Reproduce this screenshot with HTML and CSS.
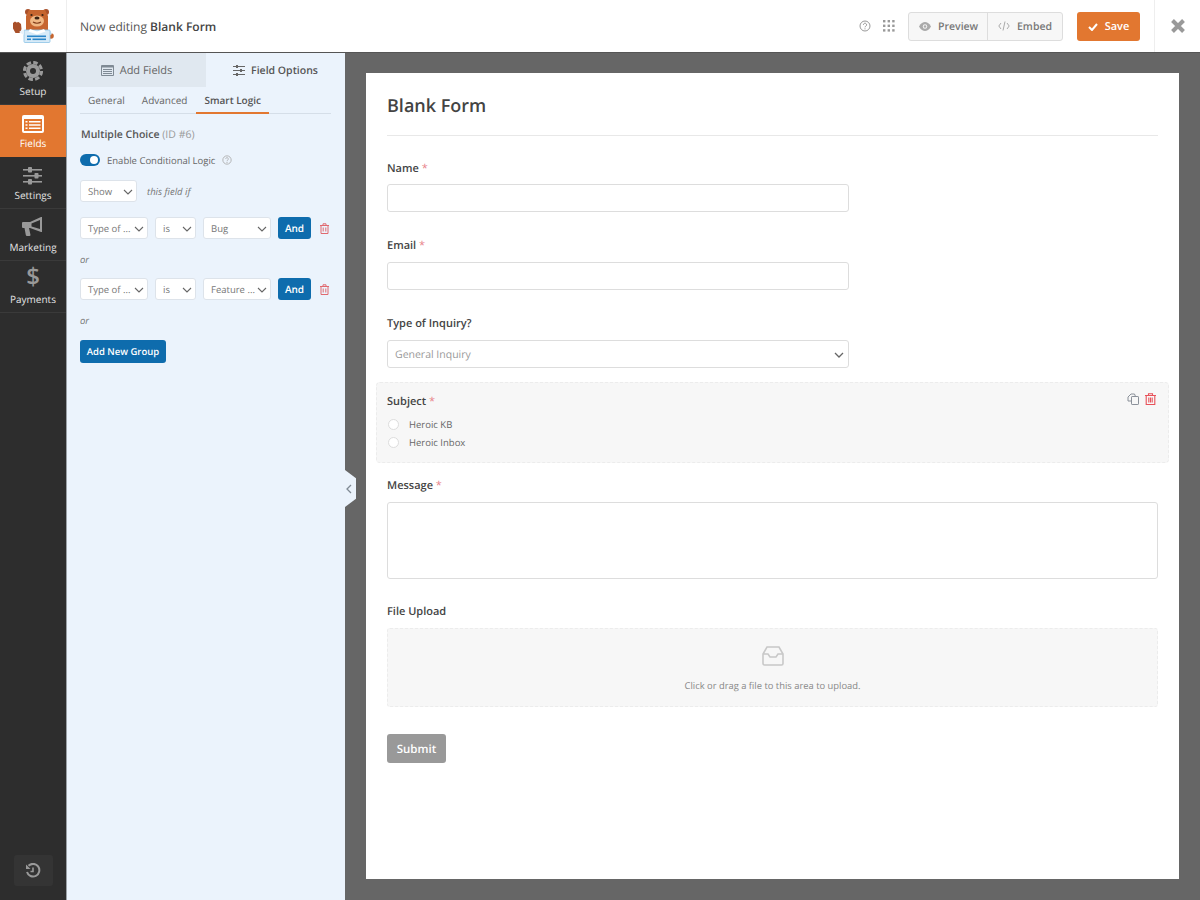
FILE: index.html
```html
<!DOCTYPE html>
<html lang="en">
<head>
<meta charset="utf-8">
<title>Now editing Blank Form</title>
<link rel="stylesheet" href="styles.css">
</head>
<body>
<div class="app">
  <header class="topbar">
    <div class="logo">
      <svg width="42" height="42" viewBox="0 0 42 42">
        <circle cx="16" cy="7" r="3" fill="#a8502a"/><circle cx="34" cy="7" r="3" fill="#a8502a"/>
        <path d="M17 5h16l3 6v14H14V11z" fill="#c6652f"/>
        <ellipse cx="25" cy="16" rx="7" ry="5.500" fill="#f0b884"/>
        <ellipse cx="25" cy="13" rx="2.500" ry="1.600" fill="#3b2314"/>
        <circle cx="19.500" cy="10" r="1.100" fill="#3b2314"/><circle cx="30.500" cy="10" r="1.100" fill="#3b2314"/>
        <path d="M21 17q4 2.500 8 0" fill="none" stroke="#7d3a18" stroke-width="1.100"/>
        <circle cx="39" cy="31" r="2.800" fill="#c6652f"/>
        <path d="M36 26h2.500l1.500 3-3 2z" fill="#cfe6f7"/>
        <rect x="12" y="25" width="26" height="12.500" rx="1" fill="#d8ebf8" stroke="#8cc3e6" stroke-width=".8"/>
        <path d="M18 24l7 2.500 7-2.500 1.500 2.500-8.500 3-8.500-3z" fill="#fff"/>
        <rect x="15" y="30.500" width="19" height="1.600" fill="#2b86c9"/><rect x="15" y="33.500" width="4" height="1.600" fill="#2b86c9"/><rect x="20.500" y="33.500" width="13.500" height="1.600" fill="#2b86c9"/>
        <path d="M1 18l2-1.500 1.500 1 2-.5 2.500 2 .5 5-1.500 4H3.500L1 23.500z" fill="#a8502a"/>
        <path d="M7 27l5 3v-4l-2-1z" fill="#e9f3fb"/>
      </svg>
    </div>
    <div class="title">Now editing <strong>Blank Form</strong></div>
    <div class="actions">
      <svg class="help" width="12" height="12" viewBox="0 0 12 12"><circle cx="6" cy="6" r="5" fill="none" stroke="#999"/><path d="M4.400 4.800a1.600 1.600 0 1 1 2.400 1.400c-.6.3-.8.6-.8 1.100" fill="none" stroke="#999"/><circle cx="6" cy="8.800" r=".6" fill="#999"/></svg>
      <svg class="apps" width="12" height="12" viewBox="0 0 12 12" fill="#999"><rect x="0" y="0" width="2.400" height="2.400"/><rect x="4.600" y="0" width="2.400" height="2.400"/><rect x="9.200" y="0" width="2.400" height="2.400"/><rect x="0" y="4.600" width="2.400" height="2.400"/><rect x="4.600" y="4.600" width="2.400" height="2.400"/><rect x="9.200" y="4.600" width="2.400" height="2.400"/><rect x="0" y="9.200" width="2.400" height="2.400"/><rect x="4.600" y="9.200" width="2.400" height="2.400"/><rect x="9.200" y="9.200" width="2.400" height="2.400"/></svg>
      <div class="btn-group">
        <div class="ghost preview-btn">
          <svg width="12" height="9" viewBox="0 0 12 9"><path d="M0 4.500C2 1 4 0 6 0s4 1 6 4.500C10 8 8 9 6 9S2 8 0 4.500z" fill="#aaa"/><circle cx="6" cy="4.500" r="2.200" fill="#f5f5f5"/><circle cx="6" cy="4.500" r="1.200" fill="#aaa"/></svg>
          <span>Preview</span>
        </div>
        <div class="ghost embed-btn">
          <svg width="12" height="10" viewBox="0 0 12 10" fill="none" stroke="#aaa"><path d="M3 2L.8 5 3 8M9 2l2.200 3L9 8M7 .5L5 9.500"/></svg>
          <span>Embed</span>
        </div>
      </div>
      <div class="save">
        <svg width="10" height="8" viewBox="0 0 10 8" fill="none" stroke="#fff" stroke-width="2"><path d="M1 4l3 3 5-6"/></svg>
        Save
      </div>
    </div>
    <div class="close">
      <svg width="14" height="14" viewBox="0 0 14 14" stroke="#999" stroke-width="4"><path d="M1.500 1.500l11 11M12.500 1.500l-11 11"/></svg>
    </div>
  </header>

  <div class="main">
    <nav class="sidebar">
      <div class="nav-item">
        <svg width="20" height="20" viewBox="0 0 20 20"><circle cx="10" cy="10" r="7" fill="#999"/><circle cx="10" cy="10" r="8.600" fill="none" stroke="#999" stroke-width="3" stroke-dasharray="4.500 2.250"/><circle cx="10" cy="10" r="3" fill="#2d2d2d"/></svg>
        <span>Setup</span>
      </div>
      <div class="nav-item active">
        <svg width="22" height="18" viewBox="0 0 22 18"><rect width="22" height="18" rx="2" fill="#fff"/><rect x="2" y="4" width="18" height="12" fill="#e27730"/><path d="M3.500 6h2v1.600h-2zM3.500 9.200h2v1.600h-2zM3.500 12.400h2V14h-2zM7 6h11.500v1.600H7zM7 9.200h11.500v1.600H7zM7 12.400h11.500V14H7z" fill="#fff"/></svg>
        <span>Fields</span>
      </div>
      <div class="nav-item">
        <svg width="20" height="18" viewBox="0 0 20 18" fill="#999"><rect y="2" width="19" height="1.600"/><rect y="8" width="19" height="1.600"/><rect y="14" width="19" height="1.600"/><rect x="5" y="0" width="4" height="5.500" rx=".8"/><rect x="11.500" y="6" width="4" height="5.500" rx=".8"/><rect x="5" y="12" width="4" height="5.500" rx=".8"/></svg>
        <span>Settings</span>
      </div>
      <div class="nav-item">
        <svg width="22" height="20" viewBox="0 0 22 20" fill="#999"><path d="M0 6q0-1 1-1h7l11-5h1v15h-1L8 11H7l1.500 7q0 1-1 1H5q-1 0-1.200-1L2.500 11H1q-1 0-1-1z"/><path d="M18 3L9.500 6.500v3L18 12z" fill="#2d2d2d"/></svg>
        <span>Marketing</span>
      </div>
      <div class="nav-item">
        <span class="dollar">$</span>
        <span>Payments</span>
      </div>
      <div class="history">
        <svg width="16" height="16" viewBox="0 0 16 16" fill="none" stroke="#999" stroke-width="2"><path d="M3.500 2.800A6.300 6.300 0 1 1 2 9"/><path d="M1 1.500v4.500h4.500z" fill="#999" stroke="none"/><path d="M8 4.500V8.500H5.500" stroke-width="1.600"/></svg>
      </div>
    </nav>

    <aside class="panel">
      <div class="panel-tabs">
        <div class="panel-tab">
          <svg width="13" height="11" viewBox="0 0 13 11"><rect width="13" height="11" rx="1" fill="#7f8a94"/><rect x="1" y="2.500" width="11" height="7.500" fill="#e0e8f0"/><path d="M2 4h9v1H2zM2 6h9v1H2zM2 8h9v1H2z" fill="#7f8a94"/></svg>
          Add Fields
        </div>
        <div class="panel-tab current">
          <svg width="12" height="11" viewBox="0 0 12 11" fill="#666"><rect y="1" width="12" height="1"/><rect y="5" width="12" height="1"/><rect y="9" width="12" height="1"/><rect x="3" y="0" width="2" height="3"/><rect x="7" y="4" width="2" height="3"/><rect x="3" y="8" width="2" height="3"/></svg>
          Field Options
        </div>
      </div>
      <div class="subtabs">
        <div class="subtab">General</div>
        <div class="subtab">Advanced</div>
        <div class="subtab on">Smart Logic</div>
      </div>
      <div class="field-name">Multiple Choice <span>(ID #6)</span></div>
      <div class="toggle-row">
        <span class="toggle"></span>
        <span>Enable Conditional Logic</span>
        <svg width="10" height="10" viewBox="0 0 12 12"><circle cx="6" cy="6" r="5" fill="none" stroke="#aaa"/><path d="M4.400 4.800a1.600 1.600 0 1 1 2.400 1.400c-.6.3-.8.6-.8 1.100" fill="none" stroke="#aaa"/><circle cx="6" cy="8.800" r=".7" fill="#aaa"/></svg>
      </div>
      <div class="show-row">
        <div class="select w-show">Show<svg class="chev" width="10" height="6" viewBox="0 0 10 6"><path d="M1 1l4 4 4-4"/></svg></div>
        <em>this field if</em>
      </div>
      <div class="rule">
        <div class="select w-type">Type of ...<svg class="chev" width="10" height="6" viewBox="0 0 10 6"><path d="M1 1l4 4 4-4"/></svg></div>
        <div class="select w-is">is<svg class="chev" width="10" height="6" viewBox="0 0 10 6"><path d="M1 1l4 4 4-4"/></svg></div>
        <div class="select w-val">Bug<svg class="chev" width="10" height="6" viewBox="0 0 10 6"><path d="M1 1l4 4 4-4"/></svg></div>
        <div class="and">And</div>
        <svg class="trash" width="9" height="11" viewBox="0 0 9 11" fill="none" stroke="#e0696f"><path d="M0 2.500h9M3 2.500V.8h3v1.700M1 2.500v8h7v-8M3.200 4.500v4M5.800 4.500v4"/></svg>
      </div>
      <div class="or">or</div>
      <div class="rule">
        <div class="select w-type">Type of ...<svg class="chev" width="10" height="6" viewBox="0 0 10 6"><path d="M1 1l4 4 4-4"/></svg></div>
        <div class="select w-is">is<svg class="chev" width="10" height="6" viewBox="0 0 10 6"><path d="M1 1l4 4 4-4"/></svg></div>
        <div class="select w-val">Feature ...<svg class="chev" width="10" height="6" viewBox="0 0 10 6"><path d="M1 1l4 4 4-4"/></svg></div>
        <div class="and">And</div>
        <svg class="trash" width="9" height="11" viewBox="0 0 9 11" fill="none" stroke="#e0696f"><path d="M0 2.500h9M3 2.500V.8h3v1.700M1 2.500v8h7v-8M3.200 4.500v4M5.800 4.500v4"/></svg>
      </div>
      <div class="or">or</div>
      <div class="add-group">Add New Group</div>
      <div class="handle"><svg width="6" height="10" viewBox="0 0 6 10"><path d="M5 1L1 5l4 4" fill="none" stroke="#7f8a94" stroke-width="1.300"/></svg></div>
    </aside>

    <section class="stage">
      <div class="form">
        <h1>Blank Form</h1>
        <div class="field f-name">
          <label>Name <i>*</i></label>
          <div class="input narrow"></div>
        </div>
        <div class="field f-email">
          <label>Email <i>*</i></label>
          <div class="input narrow"></div>
        </div>
        <div class="field f-type">
          <label>Type of Inquiry?</label>
          <div class="input narrow dropdown">General Inquiry<svg width="10" height="6" viewBox="0 0 10 6"><path d="M1 1l4 4 4-4" fill="none" stroke="#666" stroke-width="1.300"/></svg></div>
        </div>
        <div class="selected">
          <label>Subject <i>*</i></label>
          <div class="radio"><span class="dot"></span>Heroic KB</div>
          <div class="radio"><span class="dot"></span>Heroic Inbox</div>
          <div class="tools">
            <svg width="12" height="12" viewBox="0 0 12 12" fill="none" stroke="#8a9099"><path d="M4 1h3.500l1 2.500M4 1L1 4v4h3"/><rect x="4.500" y="3.500" width="7" height="8" rx=".6"/></svg>
            <svg width="11" height="12" viewBox="0 0 11 12" fill="none" stroke="#e8525a" stroke-width="1.100"><path d="M0 2.500h11M3.500 2.500V.8h4v1.700M1.200 2.500v9h8.600v-9M3.800 4.500v5M5.500 4.500v5M7.200 4.500v5"/></svg>
          </div>
        </div>
        <div class="field f-message">
          <label>Message <i>*</i></label>
          <div class="input textarea"></div>
        </div>
        <div class="field f-upload">
          <label>File Upload</label>
          <div class="upload">
            <svg width="22" height="20" viewBox="0 0 22 20" fill="none" stroke="#c8c8c8" stroke-width="1.600"><path d="M5 1h12l4 7v9.500q0 1.500-1.500 1.500h-17Q1 19 1 17.500V8zM1 8h5l2 3h6l2-3h5"/></svg>
            <span>Click or drag a file to this area to upload.</span>
          </div>
        </div>
        <div class="submit">Submit</div>
      </div>
    </section>
  </div>
</div>
</body>
</html>
```

FILE: styles.css
```css
* { box-sizing: border-box; }
html, body { margin: 0; padding: 0; }
body { font-family: "Open Sans", "Liberation Sans", sans-serif; color: #444; background: #666; text-rendering: geometricPrecision; }
.app { width: 1200px; height: 900px; display: flex; flex-direction: column; overflow: hidden; }

.topbar { height: 53px; flex: none; background: #fff; display: flex; align-items: center; border-bottom: 1px solid #555; }
.logo { width: 67px; height: 52px; border-right: 1px solid #eee; display: flex; align-items: center; justify-content: center; }
.title { margin-left: 13px; padding-top: 1px; font-size: 12px; color: #555; }
.title strong { font-weight: 600; color: #444; }
.actions { margin-left: auto; display: flex; align-items: center; height: 52px; }
.help { margin-right: 12px; }
.apps { margin-right: 13px; }
.btn-group { display: flex; width: 155px; height: 29px; border: 1px solid #ddd; border-radius: 3px; background: #f7f7f7; font-size: 10.500px; font-weight: 600; color: #777; }
.ghost { display: flex; align-items: center; gap: 7px; }
.ghost span { padding-top: 2px; }
.preview-btn { width: 79px; padding-left: 10px; border-right: 1px solid #ddd; }
.embed-btn { flex: 1; padding-left: 10px; }
.save { margin-left: 14px; padding-top: 1px; width: 63px; height: 29px; background: #e27730; color: #fff; border-radius: 3px; font-size: 11px; font-weight: 600; display: flex; align-items: center; justify-content: center; gap: 7px; }
.close { width: 46px; margin-left: 14px; height: 52px; border-left: 1px solid #eee; display: flex; align-items: center; justify-content: center; }

.main { flex: 1; display: flex; min-height: 0; }
.sidebar { width: 67px; flex: none; background: #2d2d2d; border-right: 1px solid #9aa0a6; display: flex; flex-direction: column; }
.nav-item { height: 52px; flex: none; border-bottom: 1px solid #3a3a3a; display: flex; flex-direction: column; align-items: center; justify-content: flex-end; padding-bottom: 6px; gap: 3px; font-size: 10px; font-weight: 400; color: #e4e4e4; }
.nav-item.active { background: #e27730; color: #fff; border-bottom-color: #e27730; }
.dollar { font-size: 24px; line-height: 24px; color: #999; font-weight: 600; }
.history { margin: auto auto 14px; width: 39px; height: 31px; background: #343434; border-radius: 3px; display: flex; align-items: center; justify-content: center; }

.panel { width: 278px; flex: none; background: #ebf3fc; position: relative; padding: 0 14px 0 13px; display: flex; flex-direction: column; align-items: flex-start; font-size: 10px; color: #666; }
.panel-tabs { display: flex; height: 34px; margin: 0 -14px 0 -13px; align-self: stretch; }
.panel-tab { flex: 1; display: flex; align-items: center; justify-content: center; gap: 6px; font-size: 11px; font-weight: 400; color: #666; background: #e0e8f0; }
.panel-tab.current { background: #ebf3fc; padding-top: 1px; font-size: 10.500px; font-weight: 600; color: #555; }
.subtabs { display: flex; align-self: stretch; height: 27px; border-bottom: 1px solid #d5dee8; gap: 1px; }
.subtab { padding: 0 8px; height: 27px; line-height: 27px; font-size: 10px; color: #666; }
.subtab.on { font-weight: 600; color: #555; border-bottom: 2px solid #e27730; }
.field-name { margin-top: 13px; font-size: 10.500px; font-weight: 600; color: #555; line-height: 16px; padding-left: 1px; }
.field-name span { font-weight: 400; color: #999; }
.toggle-row { margin-top: 10px; display: flex; align-items: center; gap: 7px; font-size: 9.500px; height: 14px; }
.toggle { width: 20px; height: 12px; background: #0e6cad; border-radius: 6px; position: relative; }
.toggle::after { content: ""; position: absolute; right: 2px; top: 2px; width: 8px; height: 8px; border-radius: 50%; background: #fff; }
.show-row { margin-top: 13px; display: flex; align-items: center; gap: 10px; height: 22px; }
.show-row em { font-size: 9.500px; color: #777; }
.select { height: 22px; background: #fff; border: 1px solid #dde3ea; border-radius: 3px; font-size: 9.500px; color: #777; display: flex; align-items: center; padding-left: 7px; position: relative; }
.chev { position: absolute; right: 3px; top: 8px; }
.chev path { fill: none; stroke: #666; stroke-width: 1.100; }
.w-show { width: 57px; }
.w-type { width: 68px; }
.w-is { width: 41px; }
.w-val { width: 68px; }
.rule { margin-top: 15px; display: flex; align-items: center; gap: 7px; height: 22px; }
.rule + .or + .rule { margin-top: 11px; }
.and { width: 33px; height: 22px; background: #0e6cad; color: #fff; border-radius: 3px; font-size: 10px; font-weight: 600; display: flex; align-items: center; justify-content: center; }
.trash { margin-left: 2px; }
.or { margin-top: 14px; height: 14px; line-height: 14px; font-size: 9.500px; font-style: italic; color: #777; }
.add-group { margin-top: 12px; width: 86px; height: 23px; background: #0e6cad; color: #fff; border-radius: 3px; font-size: 9.500px; font-weight: 600; display: flex; align-items: center; justify-content: center; }
.handle { position: absolute; left: 278px; top: 417px; width: 11px; height: 37px; background: #ebf3fc; clip-path: polygon(0 0, 100% 22%, 100% 78%, 0 100%); display: flex; align-items: center; padding-left: 1px; }

.stage { flex: 1; padding: 20px 21px; }
.form { height: 806px; background: #fff; padding: 0 21px; }
.form h1 { margin: 0; padding-top: 20px; height: 63px; font-size: 18px; line-height: 26px; font-weight: 600; color: #444; border-bottom: 1px solid #e8e8e8; }
.field label, .selected label { display: block; padding-top: 1px; font-size: 11px; font-weight: 600; color: #444; line-height: 16px; }
label i { color: #e8838a; font-style: normal; font-weight: 400; }
.input { height: 28px; border: 1px solid #ddd; border-radius: 3px; background: #fff; margin-top: 7px; }
.narrow { width: 462px; }
.f-name { margin-top: 24px; }
.f-email { margin-top: 25px; }
.f-email .input, .f-type .input { margin-top: 8px; }
.f-type { margin-top: 25px; }
.dropdown { display: flex; align-items: center; justify-content: space-between; padding: 1px 4px 0 7px; font-size: 10.500px; color: #999; }
.selected { margin: 14px -11px 0; height: 81px; padding: 10px 10px 0; background: #f7f7f7; border: 1px dashed #ececec; border-radius: 4px; position: relative; }
.radio { display: flex; align-items: center; padding-left: 1px; font-size: 9.500px; color: #666; height: 17.500px; }
.selected label + .radio { margin-top: 6px; }
.dot { width: 11px; height: 11px; border-radius: 50%; background: #fff; border: 1px solid #ddd; margin-right: 10px; }
.tools { position: absolute; top: 10px; right: 12px; display: flex; gap: 6px; }
.f-message { margin-top: 14px; }
.textarea { height: 77px; margin-top: 8px; }
.f-upload { margin-top: 24px; }
.upload { margin-top: 8px; height: 79px; background: #f7f7f7; border: 1px dashed #ececec; border-radius: 3px; display: flex; flex-direction: column; align-items: center; padding-top: 17px; gap: 13px; font-size: 9.400px; color: #888; }
.submit { margin-top: 27px; padding-top: 1px; width: 59px; height: 29px; background: #999; color: #fff; border-radius: 3px; font-size: 11.500px; font-weight: 600; display: flex; align-items: center; justify-content: center; }
```
